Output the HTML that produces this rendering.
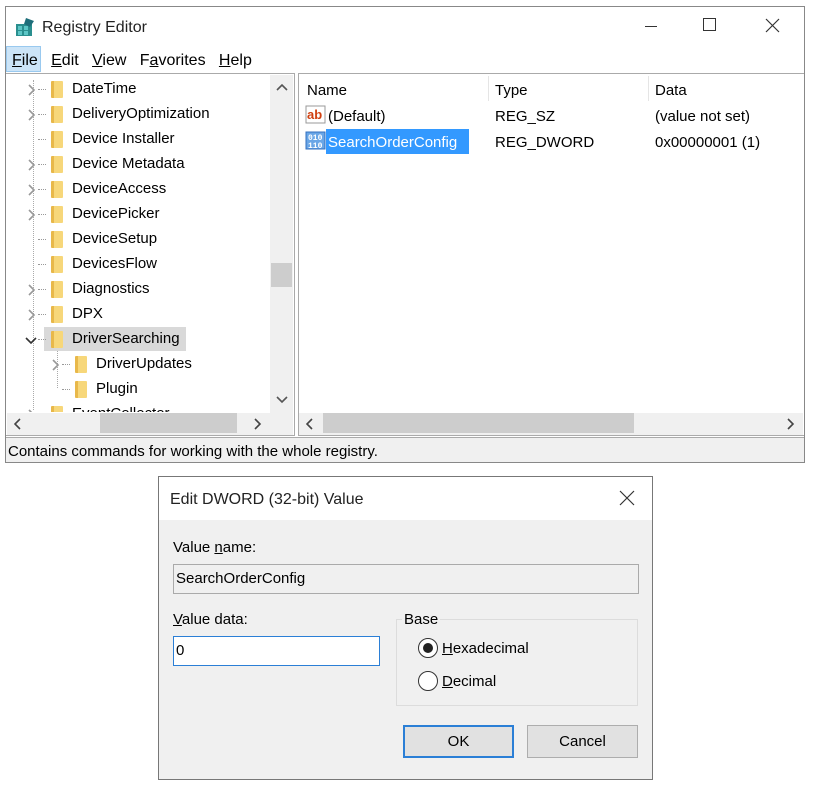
<!DOCTYPE html>
<html><head><style>
*{margin:0;padding:0;box-sizing:border-box}
body{width:815px;height:789px;background:#fff;position:relative;font-family:"Liberation Sans",sans-serif;font-size:15px;color:#000;overflow:hidden}
.a{position:absolute}
.t{position:absolute;white-space:nowrap;line-height:18px;margin-top:2px}
.fold{position:absolute;width:12px;height:17px;background:linear-gradient(90deg,#e8b84a 0 3px,#f7d77a 3px);border-radius:1px}
.dot{position:absolute;border-top:1px dotted #999;width:8px}
u{text-decoration:underline}
</style></head><body>
<div class="a" style="left:5px;top:6px;width:800px;height:457px;border:1px solid #888;background:#fff"></div>
<svg class="a" style="left:14px;top:16px" width="22" height="22"><rect x="2" y="8" width="16" height="12" fill="#2a8f8f"/><path d="M4 10h4v4H4zM10 10h4v4h-4zM4 15h4v4H4zM10 15h4v4h-4z" fill="#5cc6c6"/><path d="M12 2l8 3-4 6-6-3z" fill="#1e6e7a"/></svg>
<div class="t" style="left:42px;top:17px;font-size:16px;color:#222">Registry Editor</div>
<div class="a" style="left:645px;top:26px;width:12px;border-top:1px solid #333"></div>
<div class="a" style="left:703px;top:18px;width:13px;height:13px;border:1px solid #333"></div>
<svg class="a" style="left:765px;top:18px" width="15" height="15"><path d="M1 1L14 14M14 1L1 14" stroke="#333" stroke-width="1.2"/></svg>
<div class="a" style="left:6px;top:46px;width:35px;height:26px;background:#cce4f7;border:1px solid #99c9ef"></div>
<div class="t" style="left:12px;top:50px;font-size:16px"><u>F</u>ile&nbsp;&nbsp;&nbsp;<u>E</u>dit&nbsp;&nbsp;&nbsp;<u>V</u>iew&nbsp;&nbsp;&nbsp;F<u>a</u>vorites&nbsp;&nbsp;&nbsp;<u>H</u>elp</div>
<div class="a" style="left:6px;top:73px;width:289px;height:363px;border:1px solid #aaa;border-left:none"></div>
<div class="a" style="left:270px;top:75px;width:23px;height:338px;background:#f0f0f0"></div>
<div class="a" style="left:271px;top:263px;width:21px;height:24px;background:#cdcdcd"></div>
<svg class="a" style="left:276px;top:84px" width="12" height="8"><path d="M1 6L6 1L11 6" stroke="#555" stroke-width="1.6" fill="none"/></svg>
<svg class="a" style="left:276px;top:396px" width="12" height="8"><path d="M1 1L6 6L11 1" stroke="#555" stroke-width="1.6" fill="none"/></svg>
<div class="a" style="left:7px;top:413px;width:286px;height:22px;background:#f0f0f0"></div>
<div class="a" style="left:100px;top:413px;width:137px;height:20px;background:#cdcdcd"></div>
<svg class="a" style="left:14px;top:418px" width="8" height="12"><path d="M6 1L1 6L6 11" stroke="#444" stroke-width="1.6" fill="none"/></svg>
<svg class="a" style="left:254px;top:418px" width="8" height="12"><path d="M1 1L6 6L1 11" stroke="#444" stroke-width="1.6" fill="none"/></svg>
<div class="a" style="left:33px;top:80px;height:330px;border-left:1px dotted #aaa"></div>
<div class="a" style="left:57px;top:350px;height:38px;border-left:1px dotted #aaa"></div>
<div id="tree"></div>
<div class="a" style="left:298px;top:73px;width:506px;height:363px;border:1px solid #aaa;border-right:none"></div>
<div class="a" style="left:488px;top:76px;height:25px;border-left:1px solid #e5e5e5"></div>
<div class="a" style="left:648px;top:76px;height:25px;border-left:1px solid #e5e5e5"></div>
<div class="t" style="left:307px;top:80px">Name</div>
<div class="t" style="left:495px;top:80px">Type</div>
<div class="t" style="left:655px;top:80px">Data</div>
<svg class="a" style="left:305px;top:105px" width="22" height="20"><rect x="1" y="1" width="19" height="17" fill="#fff" stroke="#999"/><text x="2" y="14" font-family="Liberation Sans" font-weight="bold" font-size="13" fill="#d04010">ab</text></svg>
<div class="t" style="left:328px;top:106px">(Default)</div>
<div class="t" style="left:495px;top:106px">REG_SZ</div>
<div class="t" style="left:655px;top:106px">(value not set)</div>
<svg class="a" style="left:305px;top:131px" width="22" height="20"><rect x="1" y="1" width="19" height="17" fill="#6aa6e6" stroke="#3370c0"/><text x="3" y="9" font-family="Liberation Mono" font-weight="bold" font-size="8" fill="#fff">010</text><text x="3" y="17" font-family="Liberation Mono" font-weight="bold" font-size="8" fill="#fff">110</text></svg>
<div class="a" style="left:326px;top:129px;width:143px;height:25px;background:#3399ff"></div>
<div class="t" style="left:328px;top:132px;color:#fff">SearchOrderConfig</div>
<div class="t" style="left:495px;top:132px">REG_DWORD</div>
<div class="t" style="left:655px;top:132px">0x00000001 (1)</div>
<div class="a" style="left:299px;top:413px;width:504px;height:22px;background:#f0f0f0"></div>
<div class="a" style="left:323px;top:413px;width:311px;height:20px;background:#cdcdcd"></div>
<svg class="a" style="left:306px;top:418px" width="8" height="12"><path d="M6 1L1 6L6 11" stroke="#444" stroke-width="1.6" fill="none"/></svg>
<svg class="a" style="left:787px;top:418px" width="8" height="12"><path d="M1 1L6 6L1 11" stroke="#444" stroke-width="1.6" fill="none"/></svg>
<div class="a" style="left:6px;top:437px;width:798px;height:25px;background:#f0f0f0;border-top:1px solid #aaa"></div>
<div class="t" style="left:8px;top:441px">Contains commands for working with the whole registry.</div>
<div class="a" style="left:158px;top:476px;width:495px;height:304px;border:1px solid #777;background:#f0f0f0"></div>
<div class="a" style="left:159px;top:477px;width:493px;height:43px;background:#fff"></div>
<div class="t" style="left:170px;top:489px;font-size:16px;color:#222">Edit DWORD (32-bit) Value</div>
<svg class="a" style="left:619px;top:490px" width="16" height="16"><path d="M1 1L15 15M15 1L1 15" stroke="#333" stroke-width="1.2"/></svg>
<div class="t" style="left:173px;top:537px">Value <u>n</u>ame:</div>
<div class="a" style="left:173px;top:564px;width:466px;height:30px;border:1px solid #aaa;background:#f0f0f0"></div>
<div class="t" style="left:176px;top:568px">SearchOrderConfig</div>
<div class="t" style="left:173px;top:609px"><u>V</u>alue data:</div>
<div class="a" style="left:173px;top:636px;width:207px;height:30px;border:1px solid #2b7fd6;background:#fff"></div>
<div class="t" style="left:176px;top:640px">0</div>
<div class="a" style="left:396px;top:619px;width:242px;height:87px;border:1px solid #dcdcdc"></div>
<div class="t" style="left:402px;top:609px;background:#f0f0f0;padding:0 2px">Base</div>
<div class="a" style="left:418px;top:638px;width:20px;height:20px;border:1px solid #333;border-radius:50%;background:#fff"></div>
<div class="a" style="left:423px;top:643px;width:10px;height:10px;border-radius:50%;background:#222"></div>
<div class="t" style="left:442px;top:638px"><u>H</u>exadecimal</div>
<div class="a" style="left:418px;top:671px;width:20px;height:20px;border:1px solid #333;border-radius:50%;background:#fff"></div>
<div class="t" style="left:442px;top:671px"><u>D</u>ecimal</div>
<div class="a" style="left:403px;top:725px;width:111px;height:33px;border:2px solid #2b7fd6;background:#e1e1e1"></div>
<div class="t" style="left:403px;top:731px;width:111px;text-align:center">OK</div>
<div class="a" style="left:527px;top:725px;width:111px;height:33px;border:1px solid #adadad;background:#e1e1e1"></div>
<div class="t" style="left:527px;top:731px;width:111px;text-align:center">Cancel</div>
<script>
var rows=[["DateTime",1,0],["DeliveryOptimization",1,0],["Device Installer",0,0],["Device Metadata",1,0],["DeviceAccess",1,0],["DevicePicker",1,0],["DeviceSetup",0,0],["DevicesFlow",0,0],["Diagnostics",1,0],["DPX",1,0],["DriverSearching",2,0],["DriverUpdates",1,1],["Plugin",0,1],["EventCollector",1,0]];
var h="";rows.forEach(function(r,i){var y=78+i*25,x=r[2]?72:48;
if(i==10)h+='<div class="a" style="left:44px;top:'+(y-1)+'px;width:142px;height:24px;background:#d9d9d9"></div>';
if(r[1]==1)h+='<svg class="a" style="left:'+(x-20)+'px;top:'+(y+6)+'px" width="8" height="12"><path d="M1 1L6 6L1 11" stroke="#999" stroke-width="1.6" fill="none"/></svg>';
if(r[1]==2)h+='<svg class="a" style="left:'+(x-23)+'px;top:'+(y+9)+'px" width="12" height="8"><path d="M1 1L6 6L11 1" stroke="#333" stroke-width="1.6" fill="none"/></svg>';
h+='<div class="dot" style="left:'+(x-10)+'px;top:'+(y+11)+'px"></div>';
h+='<div class="fold" style="left:'+(x+3)+'px;top:'+(y+3)+'px"></div>';
h+='<div class="t" style="left:'+(x+24)+'px;top:'+y+'px">'+r[0]+'</div>';});
var d=document.getElementById('tree');d.innerHTML=h;
d.style.cssText='position:absolute;left:0;top:0;width:270px;height:412px;overflow:hidden';
</script>
</body></html>
